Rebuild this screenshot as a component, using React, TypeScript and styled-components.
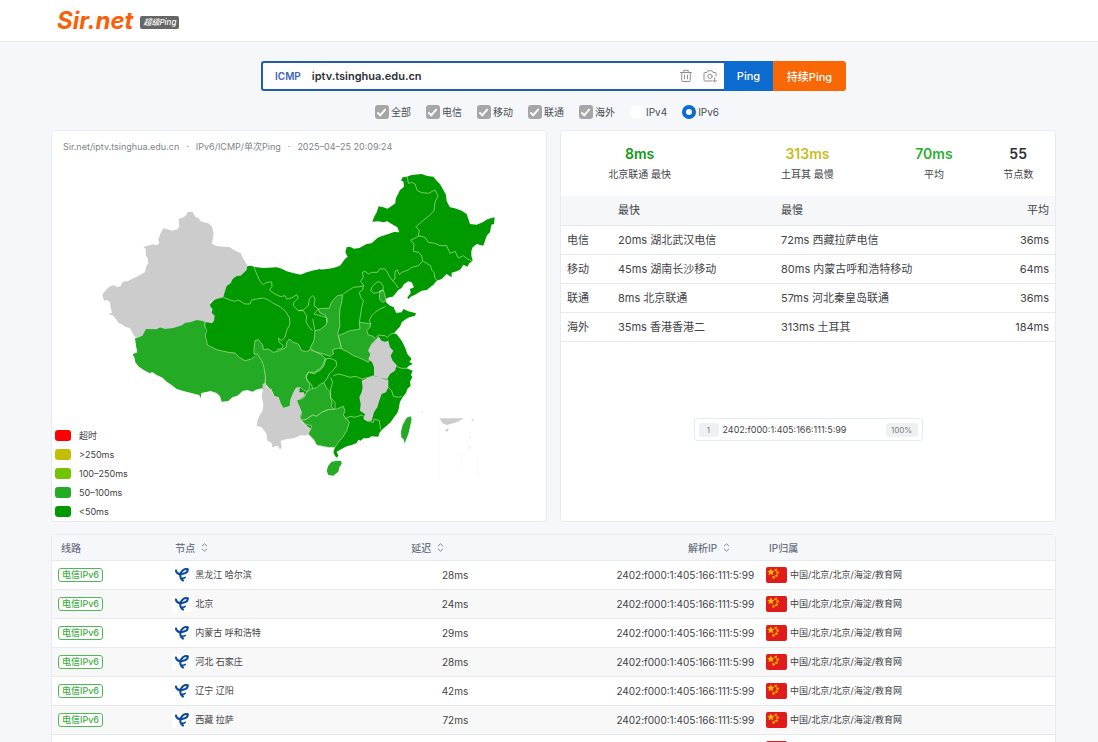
import React from "react";
import styled, { createGlobalStyle, css } from "styled-components";

const Global = createGlobalStyle`
  *, *::before, *::after { box-sizing: border-box; }
  html, body { margin: 0; padding: 0; }
  body {
    background: #f5f7fb;
    color: #3f4449;
    font-family: Inter, "Noto Sans CJK SC", sans-serif;
    font-size: 10px;
    line-height: 14px;
  }
  button, input { font-family: inherit; margin: 0; }
`;

const Page = styled.div`
  height: 100vh;
  overflow: hidden;
`;

const Header = styled.header`
  display: flex;
  align-items: center;
  height: 42px;
  padding: 0 57px;
  background: #fff;
  border-bottom: 1px solid #e3e8ec;
`;

const Logo = styled.a`
  display: flex;
  align-items: center;
  gap: 7px;
  text-decoration: none;
`;

const LogoName = styled.span`
  color: #fb5f07;
  font-size: 24px;
  font-weight: 700;
  font-style: italic;
  line-height: 28px;
`;

const LogoTag = styled.span`
  margin-top: 3px;
  padding: 0 3px;
  border-radius: 2px;
  background: #666;
  color: #fff;
  font-size: 8px;
  font-weight: 500;
  font-style: italic;
  line-height: 13px;
`;

const Main = styled.main`
  padding: 19px 42px 0 51px;
`;

const SearchBar = styled.form`
  display: flex;
  width: 585px;
  height: 30px;
  margin: 0 auto;
`;

const SearchBox = styled.div`
  display: flex;
  flex: 1;
  align-items: center;
  gap: 10px;
  padding: 0 7px 0 12px;
  border: 2px solid #205fa8;
  border-right: 0;
  border-radius: 3px 0 0 3px;
  background: #fff;
`;

const Protocol = styled.button`
  padding: 0;
  border: 0;
  background: none;
  color: #3a63ba;
  font-size: 10px;
  font-weight: 600;
`;

const HostInput = styled.input`
  flex: 1;
  min-width: 0;
  padding: 0 1px;
  border: 0;
  outline: 0;
  background: none;
  color: #2b3138;
  font-size: 11px;
  font-weight: 600;
`;

const IconButton = styled.button`
  display: flex;
  padding: 0;
  border: 0;
  background: none;
  color: #8f8f8f;
`;

const Submit = styled.button<{ $accent?: boolean }>`
  width: ${(p) => (p.$accent ? "73px" : "49px")};
  padding: 0;
  border: 0;
  border-radius: ${(p) => (p.$accent ? "0 3px 3px 0" : "0")};
  background: ${(p) => (p.$accent ? "#fa6805" : "#0b6bcf")};
  color: #fff;
  font-size: 11px;
  font-weight: 500;
`;

const Filters = styled.div`
  display: flex;
  justify-content: center;
  gap: 15px;
  padding: 14px 0 11px 0;
  margin-right: 13px;
`;

const Option = styled.label`
  display: flex;
  align-items: center;
  gap: 2px;
  color: #4b4f54;
`;

const Check = styled.input.attrs({ type: "checkbox" })`
  display: grid;
  place-items: center;
  appearance: none;
  width: 14px;
  height: 14px;
  border-radius: 3px;
  background: #a6a6a6;
  &::after {
    content: "";
    width: 5px;
    height: 9px;
    margin-top: -2px;
    border: solid #fff;
    border-width: 0 2px 2px 0;
    transform: rotate(42deg);
  }
`;

const Radio = styled.input.attrs({ type: "radio" })`
  appearance: none;
  width: 14px;
  height: 14px;
  border-radius: 50%;
  background: #fff;
  &:checked { border: 4px solid #0b6bcf; }
`;

const Panels = styled.div`
  display: grid;
  grid-template-columns: 1fr 1fr;
  gap: 13px;
`;

const Panel = styled.section`
  position: relative;
  display: flex;
  flex-direction: column;
  min-height: 392px;
  border: 1px solid #e8ecf1;
  border-radius: 4px;
  background: #fff;
  overflow: hidden;
`;

const Caption = styled.p`
  display: flex;
  gap: 7px;
  margin: 0;
  padding: 9px 11px 5px;
  color: #808488;
  font-size: 9px;
`;

const MapSvg = styled.svg`
  display: block;
  width: 100%;
  height: auto;
`;

const Legend = styled.ul`
  position: absolute;
  left: 3px;
  bottom: 0;
  margin: 0;
  padding: 0;
  list-style: none;
`;

const LegendItem = styled.li`
  display: flex;
  align-items: center;
  gap: 8px;
  height: 19px;
  color: #404040;
  font-size: 9px;
`;

const Swatch = styled.span<{ $color: string }>`
  width: 16px;
  height: 11px;
  border-radius: 3px;
  background: ${(p) => p.$color};
`;

const Stats = styled.dl`
  display: grid;
  grid-template-columns: 158fr 159fr 75fr 74fr;
  column-gap: 10px;
  margin: 0;
  padding: 13px 0 15px;
  text-align: center;
`;

const Stat = styled.div`
  display: flex;
  flex-direction: column-reverse;
  gap: 3px;
`;

const StatValue = styled.dd<{ $color: string }>`
  margin: 0;
  color: ${(p) => p.$color};
  font-size: 14px;
  font-weight: 600;
  line-height: 20px;
`;

const Summary = styled.table`
  width: 100%;
  border-collapse: collapse;
  table-layout: fixed;
  font-size: 11px;
  th, td {
    height: 29px;
    padding: 0 6px;
    border-bottom: 1px solid #e6eaee;
    font-weight: 400;
    text-align: left;
  }
  thead th { background: #f5f7f9; }
  tr > :nth-child(1) { width: 51px; }
  tr > :nth-child(2) { width: 163px; }
  tr > :last-child { width: 80px; text-align: right; }
`;

const IpArea = styled.div`
  display: grid;
  flex: 1;
  place-items: center;
  padding-bottom: 3px;
`;

const IpBox = styled.div`
  display: flex;
  align-items: center;
  gap: 4px;
  width: 229px;
  height: 23px;
  padding: 0 4px;
  border: 1px solid #e3ecf0;
  border-radius: 3px;
  font-size: 9px;
`;

const IpText = styled.span`
  flex: 1;
`;

const Chip = styled.span<{ $wide?: boolean }>`
  width: ${(p) => (p.$wide ? "32px" : "20px")};
  border-radius: 3px;
  background: #eef0f2;
  color: #7c8084;
  font-size: 8px;
  text-align: center;
`;

const Results = styled.table`
  width: 100%;
  margin-top: 12px;
  border-collapse: separate;
  border-spacing: 0;
  table-layout: fixed;
  border: 1px solid #e8ecf1;
  border-radius: 4px 4px 0 0;
  background: #fff;
  th {
    height: 26px;
    padding: 0 9px;
    border-bottom: 1px solid #e6eaee;
    color: #6d7480;
    font-weight: 500;
    text-align: left;
  }
  td {
    height: 29px;
    padding: 0 6px;
    border-bottom: 1px solid #e6eaee;
  }
  tbody tr:nth-child(even) { background: #f8f8f8; }
  thead { background: #f5f7fb; }
`;

const Col = styled.col<{ $share: number }>`
  width: ${(p) => p.$share}%;
`;

const numeric = css`
  text-align: right;
`;

const NumCell = styled.td`
  ${numeric}
`;

const HeadLabel = styled.span<{ $end?: boolean }>`
  display: flex;
  align-items: center;
  justify-content: ${(p) => (p.$end ? "flex-end" : "flex-start")};
  gap: 6px;
  padding-right: ${(p) => (p.$end ? "21px" : "0")};
`;

const SortButton = styled.button`
  display: flex;
  padding: 0;
  border: 0;
  background: none;
  color: #7d8590;
`;

const LineTag = styled.span`
  display: block;
  width: 45px;
  border: 1px solid #4dba55;
  border-radius: 3px;
  color: #3fae47;
  background: #fff;
  font-size: 9px;
  font-weight: 500;
  line-height: 12px;
  text-align: center;
`;

const IconText = styled.span`
  display: flex;
  align-items: center;
  gap: 3px;
  font-size: 9px;
`;

const TelecomFrame = styled.svg`
  width: 20px;
  height: 16px;
  border-radius: 2px;
  background: #fff;
`;

const TrashIcon = () => (
  <svg width="14" height="14" viewBox="0 0 14 14" fill="none" stroke="currentColor" strokeWidth="1" strokeLinecap="round" strokeLinejoin="round">
    <path d="M1.500 3.500h11M4.800 3.500V1.300h4.400v2.200M2.700 3.500v8a1 1 0 0 0 1 1h6.600a1 1 0 0 0 1-1v-8M5.500 6.200v3.600M8.500 6.200v3.600" />
  </svg>
);

const CameraIcon = () => (
  <svg width="14" height="14" viewBox="0 0 14 14" fill="none" stroke="currentColor" strokeWidth="1" strokeLinecap="round" strokeLinejoin="round">
    <path d="M9 12H2a1 1 0 0 1-1-1V4.500a1 1 0 0 1 1-1h2l1-1.700h4l1 1.700h2a1 1 0 0 1 1 1V7" />
    <circle cx="7" cy="7.300" r="2.200" />
    <path d="M11.700 8.800v4M10.100 11.400l1.600 1.600 1.600-1.600" />
  </svg>
);

const SortIcon = () => (
  <svg width="7" height="9" viewBox="0 0 7 9" fill="none" stroke="currentColor" strokeWidth="1">
    <path d="M1 3.200L3.500.8 6 3.200M1 5.800l2.500 2.400L6 5.800" />
  </svg>
);

const TelecomIcon = () => (
  <TelecomFrame viewBox="0 0 20 16" aria-hidden="true">
    <g fill="none" stroke="#0b4a9c" strokeLinecap="round">
      <path d="M4 3.600C4.200 6.600 7.500 7.600 11 6.800c2.800-.6 4.800-2 4.700-4.200" strokeWidth="2.200" />
      <path d="M15.500 2.300c-2.500-1-6 .8-6.900 4.500-.7 3 .2 5.600 2.400 6.700" strokeWidth="2.100" />
      <path d="M10 11c1.400.4 2.600 0 3.300-.8" strokeWidth="1.500" />
    </g>
  </TelecomFrame>
);

const STAR = "M0-1L.3-.36.95-.31.46.16.59.81 0 .5-.59.81-.46.16-.95-.31-.3-.36Z";

const Flag = () => (
  <svg width="21" height="16" viewBox="0 0 21 16" aria-hidden="true">
    <rect width="21" height="16" rx="2" fill="#e01b1b" />
    <g fill="#ffbe00">
      <path d={STAR} transform="translate(4.800 5.200) scale(3.800)" />
      <path d={STAR} transform="translate(9.800 3) scale(1.900) rotate(20)" />
      <path d={STAR} transform="translate(11.600 5.600) scale(1.900) rotate(40)" />
      <path d={STAR} transform="translate(10.400 8.600) scale(1.900)" />
      <path d={STAR} transform="translate(7.600 10.400) scale(1.900) rotate(20)" />
    </g>
  </svg>
);

const FAST = "#009900";
const MEDIUM = "#24aa24";
const NONE = "#cccccc";
const EDGE = "#b4e3a0";

const ChinaMap = () => (
  <MapSvg viewBox="-114 -15 1482 1000" role="img" aria-label="中国延迟地图">
    <g fill={FAST}>
      <path d="M462 308L482 305 495 309 520 312 560 310 575 314 590 322 612 328 640 334 660 328 690 314 700 330 700 620 480 620 400 580 335 545 335 480 350 460 355 425 385 395 395 355 430 330Z" />
      <path transform="translate(630 0)" d="M-10 335L0 333 20 325 45 318 75 316 100 312 120 305 135 285 143 278 136 265 140 250 150 248 162 254 178 252 200 240 215 238 232 222 240 218 265 210 282 204 298 205 292 190 275 180 262 172 250 175 235 172 217 173 222 160 230 145 236 127 250 130 262 134 275 126 286 118 287 105 293 92 300 78 312 68 310 52 303 50 308 40 320 38 335 33 365 30 382 36 400 38 410 50 420 60 430 78 438 92 440 112 450 130 462 132 485 140 500 150 505 165 510 180 530 182 548 175 562 166 584 160 582 180 574 182 570 205 560 215 550 245 530 240 518 250 514 262 514 275 518 290 508 298 502 308 490 302 482 316 470 322 455 326 455 340 440 330 425 345 410 350 400 362 380 378 365 380 345 392 332 398 325 406 322 400 332 388 330 375 342 370 335 355 325 352 312 360 305 372 295 378 290 385 278 398 268 400 258 404 258 415 270 425 282 430 283 450 292 446 305 445 310 435 325 442 348 448 345 455 328 460 318 465 305 475 300 488 288 500 280 510 240 530 -10 530Z" />
      <path transform="translate(630 435)" d="M-30 -10L283 0 305 42 295 55 280 72 290 76 305 95 315 115 322 135 335 150 328 158 338 165 325 172 320 178 338 185 333 198 337 205 330 218 332 230 322 240 318 252 308 265 300 278 296 300 292 312 282 325 272 340 258 352 246 362 238 372 235 383 215 382 205 388 190 388 182 395 175 392 170 402 155 408 140 412 125 420 110 428 115 440 110 446 105 440 100 430 106 412 60 390 0 330 -30 200Z" />
    </g>

    <g stroke={EDGE} strokeWidth="2" strokeLinejoin="round">
      <g fill={MEDIUM}>
        <path transform="translate(90 435)" stroke="none" d="M45 88L55 85 68 79 72 60 120 55 190 45 210 30 260 35 255 60 258 95 262 108 290 122 325 130 345 132 358 145 375 155 395 150 405 142 402 135 412 135 425 155 432 175 436 200 434 225 430 240 425 238 408 242 398 248 382 243 368 246 352 260 338 264 325 276 305 278 300 262 290 252 272 246 255 250 244 252 242 268 238 258 225 255 205 250 190 246 170 240 155 228 140 218 128 206 110 198 98 190 88 192 70 182 55 172 46 160 44 148 38 136 52 130 48 110Z" />
        <path transform="translate(90 435)" d="M402 135L402 120 405 95 415 92 428 108 430 122 445 120 460 130 475 126 485 122 498 115 500 100 508 90 520 100 535 105 545 125 560 128 570 122 590 130 605 138 618 150 612 170 600 185 585 190 565 190 558 205 562 215 570 225 568 238 560 248 550 243 540 235 528 238 520 255 512 275 510 292 490 298 482 285 475 265 462 262 458 250 445 235 436 225 436 200 432 175 425 155 412 135Z" />
        <g transform="translate(630 435)">
          <path d="M128 -43L112 -40 100 -28 92 -15 88 -2 70 -2 55 0 60 12 75 18 82 30 78 48 60 62 45 65 42 95 30 118 45 128 70 135 90 142 100 135 98 122 112 118 125 118 118 90 113 75 120 50 118 30 120 0 125 -20Z" />
          <path d="M115 80L135 72 150 65 170 62 180 60 178 40 195 42 212 45 210 55 200 65 205 78 220 82 228 92 215 105 205 125 212 135 210 150 205 160 190 152 175 145 160 140 145 130 125 120 120 98Z" />
          <path d="M-10 272L5 270 15 262 18 252 32 240 50 236 62 225 72 221 80 238 90 248 92 268 97 282 93 292 104 302 85 302 65 310 50 322 38 318 20 330 10 333 0 330 5 312 -5 292Z" />
          <path d="M5 335L20 330 38 318 50 322 65 310 85 302 110 300 130 292 135 305 130 318 140 330 148 340 140 365 128 385 115 400 105 415 85 415 68 412 50 408 42 392 30 380 22 372 32 362 35 350 15 345Z" />
          <path stroke="none" d="M95 458L112 455 124 456 125 465 118 475 115 488 100 500 85 498 80 485 85 470Z" />
          <path stroke="none" d="M320 326L332 322 335 330 330 355 325 375 318 392 314 404 312 392 304 385 303 368 308 348Z" />
        </g>
        <path transform="translate(630 0)" d="M240 380L250 378 255 395 258 410 248 415 238 405Z" />
      </g>
      <g fill={NONE} stroke="none">
        <path d="M37 392L50 375 62 366 74 364 80 370 92 366 98 353 112 352 140 338 165 325 168 310 175 296 173 282 168 275 167 254 160 250 170 246 190 241 197 244 207 240 207 232 204 228 212 207 220 193 232 196 246 200 262 196 268 188 266 165 280 160 290 152 292 144 308 144 316 158 328 164 332 172 355 178 366 188 371 208 368 225 366 240 380 246 400 248 418 249 436 260 452 268 460 284 472 304 470 318 452 335 440 336 428 345 422 358 410 366 404 385 400 400 380 405 362 413 360 425 368 436 365 446 374 455 372 470 366 478 345 474 335 470 320 468 300 475 284 476 276 484 250 492 225 495 210 490 200 496 168 495 162 506 158 514 145 520 134 518 128 508 120 492 105 488 95 480 86 478 80 468 70 455 55 450 66 446 62 430 60 415 52 408 42 410Z" />
        <path transform="translate(90 435)" d="M428 225L436 222 440 235 455 240 460 262 475 265 482 285 490 298 510 292 512 270 520 250 528 236 540 235 538 250 552 250 555 260 545 268 530 275 538 290 545 308 540 325 545 340 560 350 572 358 568 372 558 380 545 378 520 388 500 390 482 395 485 415 480 422 475 412 468 410 458 416 455 402 442 395 440 375 425 355 410 350 412 335 418 320 428 305 430 285 425 262 428 245Z" />
        <g transform="translate(630 435)">
          <path d="M185 215L200 208 220 200 232 203 250 210 265 212 265 235 258 250 245 255 238 275 232 295 222 310 215 335 200 336 190 330 195 315 180 305 182 285 178 265 185 250 188 235Z" />
          <path d="M225 95L235 82 245 95 255 98 265 95 270 115 280 125 272 140 278 155 290 168 285 185 270 195 262 210 240 208 232 203 222 200 222 175 216 160 205 150 212 135 205 125 215 105Z" />
          <path d="M418 328H492L470 340 440 348 428 343Z" />
          <path d="M436 364l10-8-2 10-6 2zM514 331l8 1-4 5zM508 385l4-3v6zM505 417l5-4-2 6zM363 307l6 0-2 4z" />
        </g>
      </g>

      <g fill="none">
        <path d="M345 474L344 485 350 500 346 515 350 530 352 543 380 557 415 565 435 567 448 580 465 590 485 585 495 577" />
        <path d="M492 309L500 330 510 352 520 362 530 355 545 354 546 368 538 378 555 390 572 398 585 395 590 405 605 402 620 392 625 402 612 415 610 425 625 440 640 440 650 455 648 475 658 490 668 500M625 440L640 438 655 425 658 405 668 395 675 402 672 425 685 435" />
        <path d="M400 400L420 408 435 412 445 408 465 420 480 420 485 408 500 405 520 402 535 408 550 418 570 428 585 440 598 460 600 480 590 500 585 520 575 530 565 522 568 535 580 545 575 555 560 556" />
        <g transform="translate(630 0)">
          <path d="M322 38L325 58 335 55 345 60 352 80 365 86 385 88 405 78 414 95 405 115 402 140 388 155 375 165 360 178 347 188 358 200 355 215 375 220 385 235 405 238 420 245 440 245 450 268 465 262 475 282 490 275 502 285 515 290" />
          <path d="M358 215L340 225 332 228 342 240 340 262 355 265 365 275 368 292 355 305 335 310 325 318 305 325 298 332 292 318 285 322 285 345 278 350 288 362 295 372M370 292L380 298 392 305 395 318 402 325 405 342 412 350" />
          <path d="M278 350L270 340 262 325 255 315 240 314 232 325 215 325 205 330 195 322 187 325 190 340 182 352 192 365 180 368 160 370 145 380 130 390M190 365L188 378 178 385 182 400 190 410 185 430 182 450 178 475" />
          <path d="M222 362L235 352 245 358 250 368 248 380 235 385 222 388 212 380 215 370ZM256 428L240 435 225 445 215 455 208 470 212 480M55 435L42 450 60 455 78 460 82 475M38 465L42 485 45 500" />
        </g>
        <g transform="translate(630 435)">
          <path d="M100 200L115 195 135 200 150 205 165 202 175 205 185 210 205 205 220 200M90 148L108 155 110 170 98 185 88 195 80 210 72 220M90 148L75 150 70 165 62 178 50 185 45 195 25 190 18 200 22 215 35 228 38 240" />
          <path d="M92 205L98 220 92 240 92 265 105 280 105 300M135 330L150 322 165 325 185 318 195 325M200 336L220 340 222 330 238 335 240 350 242 362M265 235L275 245 280 262 295 265 305 262M288 172L305 178 320 178M228 85L235 78 255 80 262 85 272 75 285 72" />
        </g>
      </g>
      <path transform="translate(630 435)" fill="none" stroke="#f4f4f4" d="M417 325V507M532 440v67M485 430v50" />
    </g>
  </MapSvg>
);

const lines = ["全部", "电信", "移动", "联通", "海外"];

const legend = [
  ["超时", "#ff0000"],
  [">250ms", "#c3bd06"],
  ["100–250ms", "#70c400"],
  ["50–100ms", "#24aa24"],
  ["<50ms", "#009900"],
];

const stats = [
  ["8ms", "北京联通 最快", "#109a14"],
  ["313ms", "土耳其 最慢", "#c6bd1d"],
  ["70ms", "平均", "#2bb02f"],
  ["55", "节点数", "#2c3036"],
];

const summary = [
  ["电信", "20ms 湖北武汉电信", "72ms 西藏拉萨电信", "36ms"],
  ["移动", "45ms 湖南长沙移动", "80ms 内蒙古呼和浩特移动", "64ms"],
  ["联通", "8ms 北京联通", "57ms 河北秦皇岛联通", "36ms"],
  ["海外", "35ms 香港香港二", "313ms 土耳其", "184ms"],
];

const ADDRESS = "2402:f000:1:405:166:111:5:99";

const nodes = [
  ["黑龙江 哈尔滨", "28ms"],
  ["北京", "24ms"],
  ["内蒙古 呼和浩特", "29ms"],
  ["河北 石家庄", "28ms"],
  ["辽宁 辽阳", "42ms"],
  ["西藏 拉萨", "72ms"],
  ["吉林 长春", "35ms"],
];

const SortHead = ({ label, end }: { label: string; end?: boolean }) => (
  <HeadLabel $end={end}>
    {label}
    <SortButton type="button" aria-label={`按${label}排序`}>
      <SortIcon />
    </SortButton>
  </HeadLabel>
);

export default function App() {
  return (
    <Page>
      <Global />
      <Header>
        <Logo href="#">
          <LogoName>Sir.net</LogoName>
          <LogoTag>超级Ping</LogoTag>
        </Logo>
      </Header>
      <Main>
        <SearchBar onSubmit={(e) => e.preventDefault()}>
          <SearchBox>
            <Protocol type="button">ICMP</Protocol>
            <HostInput aria-label="域名或IP" defaultValue="iptv.tsinghua.edu.cn" />
            <IconButton type="button" aria-label="清空"><TrashIcon /></IconButton>
            <IconButton type="button" aria-label="截图"><CameraIcon /></IconButton>
          </SearchBox>
          <Submit type="submit">Ping</Submit>
          <Submit type="button" $accent>持续Ping</Submit>
        </SearchBar>
        <Filters>
          {lines.map((line) => (
            <Option key={line}>
              <Check defaultChecked />
              {line}
            </Option>
          ))}
          <Option><Radio name="ip" value="4" />IPv4</Option>
          <Option><Radio name="ip" value="6" defaultChecked />IPv6</Option>
        </Filters>
        <Panels>
          <Panel>
            <Caption>
              <span>Sir.net/iptv.tsinghua.edu.cn</span>
              <span>·</span>
              <span>IPv6/ICMP/单次Ping</span>
              <span>·</span>
              <span>2025–04–25 20:09:24</span>
            </Caption>
            <ChinaMap />
            <Legend>
              {legend.map(([label, color]) => (
                <LegendItem key={label}>
                  <Swatch $color={color} />
                  {label}
                </LegendItem>
              ))}
            </Legend>
          </Panel>
          <Panel>
            <Stats>
              {stats.map(([value, label, color]) => (
                <Stat key={label}>
                  <dt>{label}</dt>
                  <StatValue $color={color}>{value}</StatValue>
                </Stat>
              ))}
            </Stats>
            <Summary>
              <thead>
                <tr>
                  <th aria-label="线路" />
                  <th>最快</th>
                  <th>最慢</th>
                  <th>平均</th>
                </tr>
              </thead>
              <tbody>
                {summary.map(([line, fast, slow, avg]) => (
                  <tr key={line}>
                    <th scope="row">{line}</th>
                    <td>{fast}</td>
                    <td>{slow}</td>
                    <td>{avg}</td>
                  </tr>
                ))}
              </tbody>
            </Summary>
            <IpArea>
              <IpBox>
                <Chip>1</Chip>
                <IpText>{ADDRESS}</IpText>
                <Chip $wide>100%</Chip>
              </IpBox>
            </IpArea>
          </Panel>
        </Panels>
        <Results>
          <colgroup>
            <Col $share={11.4} />
            <Col $share={15} />
            <Col $share={15.7} />
            <Col $share={28.5} />
            <Col $share={29.4} />
          </colgroup>
          <thead>
            <tr>
              <th>线路</th>
              <th><SortHead label="节点" /></th>
              <th><SortHead label="延迟" end /></th>
              <th><SortHead label="解析IP" end /></th>
              <th>IP归属</th>
            </tr>
          </thead>
          <tbody>
            {nodes.map(([node, delay]) => (
              <tr key={node}>
                <td><LineTag>电信IPv6</LineTag></td>
                <td><IconText><TelecomIcon />{node}</IconText></td>
                <NumCell>{delay}</NumCell>
                <NumCell>{ADDRESS}</NumCell>
                <td><IconText><Flag />中国/北京/北京/海淀/教育网</IconText></td>
              </tr>
            ))}
          </tbody>
        </Results>
      </Main>
    </Page>
  );
}
